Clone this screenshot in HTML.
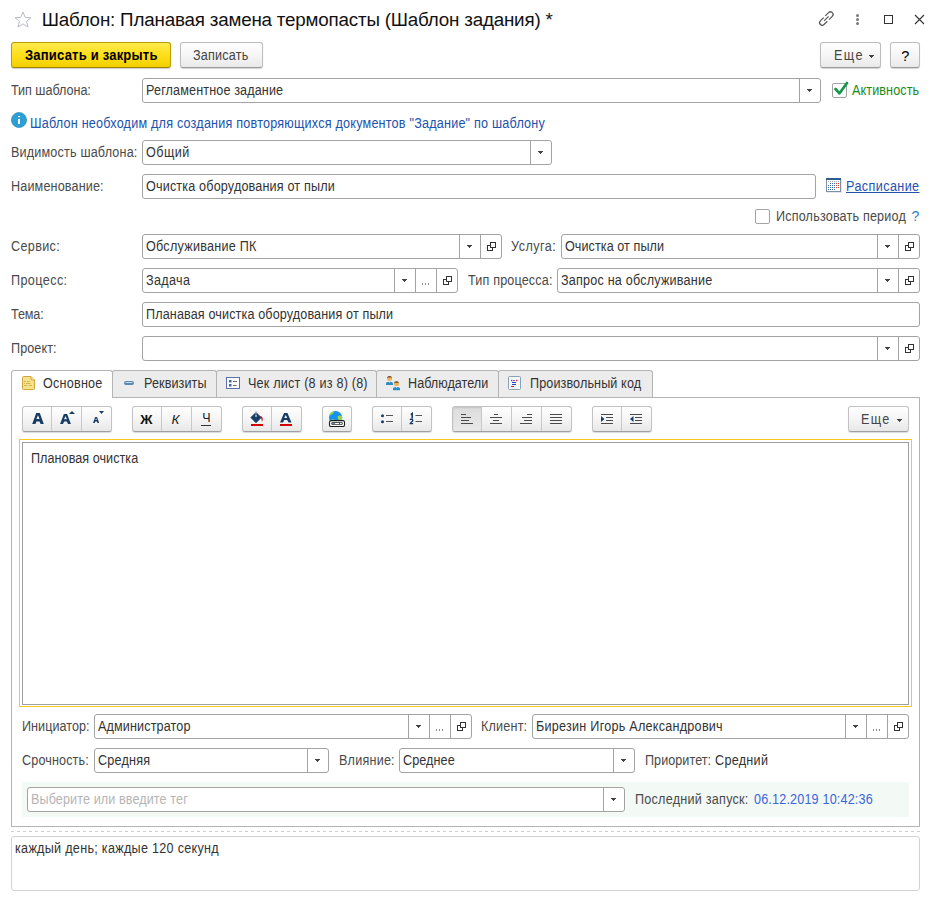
<!DOCTYPE html><html><head><meta charset="utf-8"><style>
html,body{margin:0;padding:0;background:#fff;width:934px;height:900px;overflow:hidden;position:relative;font-family:"Liberation Sans",sans-serif;}
.t{position:absolute;white-space:nowrap;line-height:1;}
.b{position:absolute;box-sizing:border-box;}
.inp{position:absolute;box-sizing:border-box;border:1px solid #a3a3a3;border-radius:3px;background:#fff;}
.sep{position:absolute;width:1px;background:#a3a3a3;}
.ico{position:absolute;line-height:0;}
.ico svg{display:block}
.btn{position:absolute;box-sizing:border-box;border:1px solid #bdbdbd;border-bottom-color:#9a9a9a;border-radius:3px;background:linear-gradient(#ffffff,#f6f6f6 50%,#e9e9e9);box-shadow:0 1px 1px rgba(0,0,0,.18);}
.tab{position:absolute;box-sizing:border-box;border:1px solid #b4b4b4;border-bottom:none;border-radius:3px 3px 0 0;background:#ececec;}
.tb{position:absolute;box-sizing:border-box;top:406px;height:26px;border:1px solid #c2c2c2;border-bottom-color:#a0a0a0;border-radius:3px;background:linear-gradient(#ffffff,#f5f5f5 50%,#e8e8e8);box-shadow:0 1px 1px rgba(0,0,0,.15);}
.tbs{position:absolute;top:0;bottom:0;width:1px;background:#c8c8c8;}
</style></head><body>

<svg style="position:absolute;left:14px;top:11px" width="18" height="17" viewBox="0 0 18 17"><path d="M9 1L11.2 6.4L17 6.7L12.5 10.4L14 16L9 12.9L4 16L5.5 10.4L1 6.7L6.8 6.4Z" fill="none" stroke="#b9bcc0" stroke-width="1"/></svg>
<div class="t" style="left:41.652px;top:10.786px;font-size:18.8px;color:#111;letter-spacing:-0.1899px;">Шаблон: Планавая замена термопасты (Шаблон задания) *</div>
<svg style="position:absolute;left:816px;top:8px" width="20" height="20" viewBox="0 0 20 20"><g transform="translate(10.3 10.6) rotate(-45) scale(0.84) translate(-10 0)" fill="none" stroke="#5a5a5a" stroke-width="1.5"><path d="M8.6 -3.1H3.1A3.1 3.1 0 0 0 3.1 3.1H8.6"/><path d="M11.4 -3.1H16.9A3.1 3.1 0 0 1 16.9 3.1H11.4"/><path d="M6.2 0H13.8"/></g></svg>
<div class="b" style="left:856px;top:14px;width:3px;height:3px;border-radius:50%;background:#7a7a7a"></div>
<div class="b" style="left:856px;top:18px;width:3px;height:3px;border-radius:50%;background:#7a7a7a"></div>
<div class="b" style="left:856px;top:22px;width:3px;height:3px;border-radius:50%;background:#7a7a7a"></div>
<div class="b" style="left:884px;top:15px;width:9px;height:9px;border:1.3px solid #333"></div>
<svg style="position:absolute;left:914px;top:14px" width="11" height="11" viewBox="0 0 11 11"><path d="M1 1L10 10M10 1L1 10" stroke="#333" stroke-width="1.1"/></svg>
<div class="b" style="left:11px;top:42px;width:160px;height:26px;border:1px solid #b9a000;border-bottom-color:#9a8400;border-radius:3px;background:linear-gradient(#ffe94f,#ffdf1a 50%,#f2d000);box-shadow:0 1px 1px rgba(0,0,0,.2)"></div>
<div class="t" style="left:24.988px;top:48.149px;font-size:14px;color:#000;letter-spacing:0.2119px;transform:scaleX(0.93);transform-origin:0 0;font-weight:bold;">Записать и закрыть</div>
<div class="btn" style="left:180px;top:42px;width:83px;height:26px"></div>
<div class="t" style="left:193.484px;top:48.149px;font-size:14.0px;color:#444;letter-spacing:0.2303px;transform:scaleX(0.9);transform-origin:0 0;">Записать</div>
<div class="btn" style="left:820px;top:42px;width:61px;height:26px"></div>
<div class="t" style="left:833.716px;top:48.149px;font-size:14.0px;color:#444;letter-spacing:1.5425px;transform:scaleX(0.9);transform-origin:0 0;">Еще</div>
<div class="b" style="left:869px;top:55px;width:5px;height:1px;background:#444"></div>
<div class="b" style="left:870px;top:56px;width:3px;height:1px;background:#444"></div>
<div class="b" style="left:871px;top:57px;width:1px;height:1px;background:#444"></div>
<div class="btn" style="left:890px;top:42px;width:30px;height:26px"></div>
<div class="t" style="left:901.254px;top:48.726px;font-size:14.5px;color:#000;letter-spacing:0.0000px;">?</div>
<div class="t" style="left:11.492px;top:83.149px;font-size:14.0px;color:#4a4a4a;letter-spacing:-0.0367px;transform:scaleX(0.9);transform-origin:0 0;">Тип шаблона:</div>
<div class="inp" style="left:142px;top:78px;width:679px;height:25px"></div>
<div class="t" style="left:145.666px;top:83.149px;font-size:14.0px;color:#333;letter-spacing:0.1500px;transform:scaleX(0.9);transform-origin:0 0;">Регламентное задание</div>
<div class="sep" style="left:799px;top:78px;height:25px"></div>
<div class="b" style="left:807px;top:89px;width:5px;height:1px;background:#444"></div>
<div class="b" style="left:808px;top:90px;width:3px;height:1px;background:#444"></div>
<div class="b" style="left:809px;top:91px;width:1px;height:1px;background:#444"></div>
<div class="b" style="left:832px;top:83px;width:15px;height:15px;border:1.2px solid #a3a3a3;border-radius:2px;background:#fff"></div>
<svg style="position:absolute;left:830px;top:78px" width="20" height="20" viewBox="0 0 20 20"><path d="M5.5 11L9.5 15.3L17 5" fill="none" stroke="#13984a" stroke-width="2.7" stroke-linecap="round" stroke-linejoin="round"/></svg>
<div class="t" style="left:852.388px;top:83.149px;font-size:14.0px;color:#1a8a1a;letter-spacing:0.1225px;transform:scaleX(0.9);transform-origin:0 0;">Активность</div>
<svg style="position:absolute;left:11px;top:112px" width="16" height="16" viewBox="0 0 16 16"><circle cx="8" cy="8" r="7.6" fill="#2c9fd4" stroke="#2384b4" stroke-width="0.6"/><rect x="7" y="4" width="2" height="1.2" fill="#fff"/><rect x="7" y="7" width="2" height="5" fill="#fff"/></svg>
<div class="t" style="left:30.266px;top:116.149px;font-size:14.0px;color:#2152ad;letter-spacing:0.2367px;transform:scaleX(0.9);transform-origin:0 0;">Шаблон необходим для создания повторяющихся документов "Задание" по шаблону</div>
<div class="t" style="left:10.566px;top:145.149px;font-size:14.0px;color:#4a4a4a;letter-spacing:0.1955px;transform:scaleX(0.9);transform-origin:0 0;">Видимость шаблона:</div>
<div class="inp" style="left:142px;top:140px;width:410px;height:25px"></div>
<div class="t" style="left:146.040px;top:145.149px;font-size:14.0px;color:#333;letter-spacing:0.5259px;transform:scaleX(0.9);transform-origin:0 0;">Общий</div>
<div class="sep" style="left:530px;top:140px;height:25px"></div>
<div class="b" style="left:538px;top:151px;width:5px;height:1px;background:#444"></div>
<div class="b" style="left:539px;top:152px;width:3px;height:1px;background:#444"></div>
<div class="b" style="left:540px;top:153px;width:1px;height:1px;background:#444"></div>
<div class="t" style="left:10.566px;top:179.149px;font-size:14.0px;color:#4a4a4a;letter-spacing:0.1623px;transform:scaleX(0.9);transform-origin:0 0;">Наименование:</div>
<div class="inp" style="left:142px;top:174px;width:674px;height:25px"></div>
<div class="t" style="left:146.040px;top:179.149px;font-size:14.0px;color:#333;letter-spacing:0.1819px;transform:scaleX(0.9);transform-origin:0 0;">Очистка оборудования от пыли</div>
<svg style="position:absolute;left:826px;top:178px" width="16" height="15" viewBox="0 0 16 15" shape-rendering="crispEdges"><rect x="1" y="1" width="15" height="14" fill="#e4e8ee"/><rect x="0.5" y="0.5" width="14" height="13" fill="#fdfeff" stroke="#7f90a4"/><rect x="0" y="0" width="15" height="2" fill="#2c5d8c"/><rect x="2" y="3" width="1" height="1" fill="#a9b0b8"/><rect x="4" y="3" width="1" height="1" fill="#a9b0b8"/><rect x="6" y="3" width="1" height="1" fill="#a9b0b8"/><rect x="8" y="3" width="1" height="1" fill="#a9b0b8"/><rect x="10" y="3" width="1" height="1" fill="#a9b0b8"/><rect x="12" y="3" width="1" height="1" fill="#a9b0b8"/><rect x="4" y="5" width="1" height="1" fill="#3a6aa2"/><rect x="6" y="5" width="1" height="1" fill="#3a6aa2"/><rect x="8" y="5" width="1" height="1" fill="#3a6aa2"/><rect x="10" y="5" width="1" height="1" fill="#d04a3a"/><rect x="12" y="5" width="1" height="1" fill="#d04a3a"/><rect x="2" y="7" width="1" height="1" fill="#3a6aa2"/><rect x="4" y="7" width="1" height="1" fill="#3a6aa2"/><rect x="6" y="7" width="1" height="1" fill="#3a6aa2"/><rect x="8" y="7" width="1" height="1" fill="#3a6aa2"/><rect x="10" y="7" width="1" height="1" fill="#d04a3a"/><rect x="12" y="7" width="1" height="1" fill="#d04a3a"/><rect x="2" y="9" width="1" height="1" fill="#3a6aa2"/><rect x="4" y="9" width="1" height="1" fill="#3a6aa2"/><rect x="6" y="9" width="1" height="1" fill="#3a6aa2"/><rect x="8" y="9" width="1" height="1" fill="#3a6aa2"/><rect x="10" y="9" width="1" height="1" fill="#d04a3a"/><rect x="12" y="9" width="1" height="1" fill="#d04a3a"/><rect x="2" y="11" width="1" height="1" fill="#3a6aa2"/><rect x="4" y="11" width="1" height="1" fill="#3a6aa2"/><rect x="6" y="11" width="1" height="1" fill="#3a6aa2"/><rect x="8" y="11" width="1" height="1" fill="#3a6aa2"/></svg>
<div class="t" style="left:846.416px;top:179.149px;font-size:14.0px;color:#2750b0;letter-spacing:0.4515px;transform:scaleX(0.9);transform-origin:0 0;text-decoration:underline">Расписание</div>
<div class="b" style="left:755px;top:209px;width:15px;height:15px;border:1.2px solid #a3a3a3;border-radius:2px;background:#fff"></div>
<div class="t" style="left:775.716px;top:209.149px;font-size:14.0px;color:#4a4a4a;letter-spacing:0.1972px;transform:scaleX(0.9);transform-origin:0 0;">Использовать период</div>
<div class="t" style="left:911.376px;top:209.149px;font-size:14px;color:#2e7fc4;letter-spacing:0.0000px;">?</div>
<div class="t" style="left:10.798px;top:239.149px;font-size:14.0px;color:#4a4a4a;letter-spacing:0.3843px;transform:scaleX(0.9);transform-origin:0 0;">Сервис:</div>
<div class="inp" style="left:142px;top:234px;width:360px;height:25px"></div>
<div class="t" style="left:146.040px;top:239.149px;font-size:14.0px;color:#333;letter-spacing:0.2756px;transform:scaleX(0.9);transform-origin:0 0;">Обслуживание ПК</div>
<div class="sep" style="left:480px;top:234px;height:25px"></div>
<div class="b" style="left:490px;top:242px;width:6px;height:6px;border:1px solid #333"></div>
<div class="b" style="left:487px;top:245px;width:1px;height:6px;background:#333"></div>
<div class="b" style="left:487px;top:250px;width:6px;height:1px;background:#333"></div>
<div class="b" style="left:487px;top:245px;width:3px;height:1px;background:#333"></div>
<div class="b" style="left:492px;top:248px;width:1px;height:3px;background:#333"></div>
<div class="sep" style="left:459px;top:234px;height:25px"></div>
<div class="b" style="left:467px;top:245px;width:5px;height:1px;background:#444"></div>
<div class="b" style="left:468px;top:246px;width:3px;height:1px;background:#444"></div>
<div class="b" style="left:469px;top:247px;width:1px;height:1px;background:#444"></div>
<div class="t" style="left:511.240px;top:239.149px;font-size:14.0px;color:#4a4a4a;letter-spacing:0.5318px;transform:scaleX(0.9);transform-origin:0 0;">Услуга:</div>
<div class="inp" style="left:561px;top:234px;width:359px;height:25px"></div>
<div class="t" style="left:565.040px;top:239.149px;font-size:14.0px;color:#333;letter-spacing:0.0735px;transform:scaleX(0.9);transform-origin:0 0;">Очистка от пыли</div>
<div class="sep" style="left:898px;top:234px;height:25px"></div>
<div class="b" style="left:908px;top:242px;width:6px;height:6px;border:1px solid #333"></div>
<div class="b" style="left:905px;top:245px;width:1px;height:6px;background:#333"></div>
<div class="b" style="left:905px;top:250px;width:6px;height:1px;background:#333"></div>
<div class="b" style="left:905px;top:245px;width:3px;height:1px;background:#333"></div>
<div class="b" style="left:910px;top:248px;width:1px;height:3px;background:#333"></div>
<div class="sep" style="left:877px;top:234px;height:25px"></div>
<div class="b" style="left:885px;top:245px;width:5px;height:1px;background:#444"></div>
<div class="b" style="left:886px;top:246px;width:3px;height:1px;background:#444"></div>
<div class="b" style="left:887px;top:247px;width:1px;height:1px;background:#444"></div>
<div class="t" style="left:10.616px;top:273.149px;font-size:14.0px;color:#4a4a4a;letter-spacing:0.4486px;transform:scaleX(0.9);transform-origin:0 0;">Процесс:</div>
<div class="inp" style="left:142px;top:268px;width:316px;height:25px"></div>
<div class="t" style="left:145.834px;top:273.149px;font-size:14.0px;color:#333;letter-spacing:0.3794px;transform:scaleX(0.9);transform-origin:0 0;">Задача</div>
<div class="sep" style="left:436px;top:268px;height:25px"></div>
<div class="b" style="left:446px;top:276px;width:6px;height:6px;border:1px solid #333"></div>
<div class="b" style="left:443px;top:279px;width:1px;height:6px;background:#333"></div>
<div class="b" style="left:443px;top:284px;width:6px;height:1px;background:#333"></div>
<div class="b" style="left:443px;top:279px;width:3px;height:1px;background:#333"></div>
<div class="b" style="left:448px;top:282px;width:1px;height:3px;background:#333"></div>
<div class="sep" style="left:415px;top:268px;height:25px"></div>
<div class="b" style="left:422px;top:283px;width:1px;height:2px;background:#8a8a8a"></div>
<div class="b" style="left:425px;top:283px;width:1px;height:2px;background:#8a8a8a"></div>
<div class="b" style="left:428px;top:283px;width:1px;height:2px;background:#8a8a8a"></div>
<div class="sep" style="left:394px;top:268px;height:25px"></div>
<div class="b" style="left:402px;top:279px;width:5px;height:1px;background:#444"></div>
<div class="b" style="left:403px;top:280px;width:3px;height:1px;background:#444"></div>
<div class="b" style="left:404px;top:281px;width:1px;height:1px;background:#444"></div>
<div class="t" style="left:467.692px;top:273.149px;font-size:14.0px;color:#4a4a4a;letter-spacing:0.1772px;transform:scaleX(0.9);transform-origin:0 0;">Тип процесса:</div>
<div class="inp" style="left:557px;top:268px;width:363px;height:25px"></div>
<div class="t" style="left:560.834px;top:273.149px;font-size:14.0px;color:#333;letter-spacing:0.2224px;transform:scaleX(0.9);transform-origin:0 0;">Запрос на обслуживание</div>
<div class="sep" style="left:898px;top:268px;height:25px"></div>
<div class="b" style="left:908px;top:276px;width:6px;height:6px;border:1px solid #333"></div>
<div class="b" style="left:905px;top:279px;width:1px;height:6px;background:#333"></div>
<div class="b" style="left:905px;top:284px;width:6px;height:1px;background:#333"></div>
<div class="b" style="left:905px;top:279px;width:3px;height:1px;background:#333"></div>
<div class="b" style="left:910px;top:282px;width:1px;height:3px;background:#333"></div>
<div class="sep" style="left:877px;top:268px;height:25px"></div>
<div class="b" style="left:885px;top:279px;width:5px;height:1px;background:#444"></div>
<div class="b" style="left:886px;top:280px;width:3px;height:1px;background:#444"></div>
<div class="b" style="left:887px;top:281px;width:1px;height:1px;background:#444"></div>
<div class="t" style="left:11.492px;top:307.149px;font-size:14.0px;color:#4a4a4a;letter-spacing:-0.1236px;transform:scaleX(0.9);transform-origin:0 0;">Тема:</div>
<div class="inp" style="left:142px;top:302px;width:778px;height:25px"></div>
<div class="t" style="left:145.666px;top:307.149px;font-size:14.0px;color:#333;letter-spacing:0.1438px;transform:scaleX(0.9);transform-origin:0 0;">Планавая очистка оборудования от пыли</div>
<div class="t" style="left:10.616px;top:341.149px;font-size:14.0px;color:#4a4a4a;letter-spacing:0.1101px;transform:scaleX(0.9);transform-origin:0 0;">Проект:</div>
<div class="inp" style="left:142px;top:336px;width:778px;height:25px"></div>
<div class="sep" style="left:898px;top:336px;height:25px"></div>
<div class="b" style="left:908px;top:344px;width:6px;height:6px;border:1px solid #333"></div>
<div class="b" style="left:905px;top:347px;width:1px;height:6px;background:#333"></div>
<div class="b" style="left:905px;top:352px;width:6px;height:1px;background:#333"></div>
<div class="b" style="left:905px;top:347px;width:3px;height:1px;background:#333"></div>
<div class="b" style="left:910px;top:350px;width:1px;height:3px;background:#333"></div>
<div class="sep" style="left:877px;top:336px;height:25px"></div>
<div class="b" style="left:885px;top:347px;width:5px;height:1px;background:#444"></div>
<div class="b" style="left:886px;top:348px;width:3px;height:1px;background:#444"></div>
<div class="b" style="left:887px;top:349px;width:1px;height:1px;background:#444"></div>
<div class="tab" style="left:112px;top:370px;width:105px;height:27px"></div>
<div class="tab" style="left:216px;top:370px;width:161px;height:27px"></div>
<div class="tab" style="left:376px;top:370px;width:123px;height:27px"></div>
<div class="tab" style="left:498px;top:370px;width:155px;height:27px"></div>
<div class="b" style="left:11px;top:397px;width:909px;height:430px;border:1px solid #b4b4b4"></div>
<div class="tab" style="left:11px;top:370px;width:102px;height:28px;background:#fff;border-color:#b4b4b4"></div>
<svg style="position:absolute;left:22px;top:376px" width="13" height="14" viewBox="0 0 13 14"><path d="M1.5 0.5H9L12.5 4V12.5A1 1 0 0 1 11.5 13.5H1.5A1 1 0 0 1 0.5 12.5V1.5A1 1 0 0 1 1.5 0.5Z" fill="#f5e28e" stroke="#cfa63c"/><path d="M9 0.5V3A1 1 0 0 0 10 4H12.5" fill="#f9eaa8" stroke="#cfa63c"/><path d="M2 5.5H4M5 5.5H7.5M2 7.5H2.8M4 7.5H8.5M2 9.5H5M6.5 9.5H10" stroke="#d6b24e" stroke-width="1"/></svg>
<div class="t" style="left:42.640px;top:376.149px;font-size:14.0px;color:#333;letter-spacing:0.2557px;transform:scaleX(0.9);transform-origin:0 0;">Основное</div>
<svg style="position:absolute;left:124px;top:381px" width="10" height="4" viewBox="0 0 10 4"><rect x="0" y="0" width="10" height="4" rx="2" fill="#5a88b0"/><rect x="1.5" y="1" width="7" height="1" fill="#c9dcec"/></svg>
<div class="t" style="left:143.666px;top:376.149px;font-size:14.0px;color:#333;letter-spacing:0.1121px;transform:scaleX(0.9);transform-origin:0 0;">Реквизиты</div>
<svg style="position:absolute;left:226px;top:377px" width="14" height="12" viewBox="0 0 14 12"><rect x="0.5" y="0.5" width="13" height="11" fill="#fafbff" stroke="#5b6fad"/><rect x="3" y="3" width="2.5" height="2.5" fill="#4a62a8"/><rect x="3" y="7" width="2.5" height="2.5" fill="#4a62a8"/><path d="M7 4.5H11M7 8.5H10.5" stroke="#6a6a6a"/></svg>
<div class="t" style="left:247.748px;top:376.149px;font-size:14.0px;color:#333;letter-spacing:0.2250px;transform:scaleX(0.9);transform-origin:0 0;">Чек лист (8 из 8) (8)</div>
<svg style="position:absolute;left:385px;top:375px" width="16" height="16" viewBox="0 0 16 16"><path d="M1 10V8.6C1 7.6 2 7 3.5 6.8L4.5 7.8L5.5 6.8C7 7 8 7.6 8 8.6V10Z" fill="#2a8cc8"/><circle cx="4.5" cy="3.6" r="2.5" fill="#eeb35a"/><path d="M2 3.6A2.5 2.5 0 0 1 7 3.6L6.2 2.6H2.8Z" fill="#6b4a28"/><path d="M8 15.2V13.8C8 12.8 9 12.2 10.5 12L11.5 13L12.5 12C14 12.2 15 12.8 15 13.8V15.2Z" fill="#2a8cc8"/><circle cx="11.5" cy="8.8" r="2.5" fill="#eeb35a"/><path d="M9 8.8A2.5 2.5 0 0 1 14 8.8L13.2 7.8H9.8Z" fill="#6b4a28"/></svg>
<div class="t" style="left:407.516px;top:376.149px;font-size:14.0px;color:#333;letter-spacing:0.0337px;transform:scaleX(0.9);transform-origin:0 0;">Наблюдатели</div>
<svg style="position:absolute;left:508px;top:376px" width="13" height="14" viewBox="0 0 13 14"><rect x="0.5" y="0.5" width="12" height="13" rx="1" fill="#f4f8fc" stroke="#8aa0b4"/><rect x="3" y="3.8" width="1.4" height="1.4" fill="#e02020"/><rect x="8" y="3.8" width="1.4" height="1.4" fill="#e02020"/><path d="M5.2 4.5H6.8M4 6.5H8M4 8.5H8" stroke="#2a3cc0" stroke-width="1"/><path d="M3 10.5H6" stroke="#e02020" stroke-width="1.1"/></svg>
<div class="t" style="left:529.616px;top:376.149px;font-size:14.0px;color:#333;letter-spacing:0.1256px;transform:scaleX(0.9);transform-origin:0 0;">Произвольный код</div>
<div class="tb" style="left:22px;width:90px">
<div class="tbs" style="left:28px"></div>
<div class="tbs" style="left:58px"></div>
</div>
<div class="tb" style="left:132px;width:90px">
<div class="tbs" style="left:28px"></div>
<div class="tbs" style="left:58px"></div>
</div>
<div class="tb" style="left:242px;width:60px">
<div class="tbs" style="left:28px"></div>
</div>
<div class="tb" style="left:322px;width:30px">
</div>
<div class="tb" style="left:372px;width:60px">
<div class="tbs" style="left:28px"></div>
</div>
<div class="tb" style="left:452px;width:120px">
<div class="b" style="left:0;top:0;width:29px;height:24px;background:linear-gradient(#dcdcdc,#e9e9e9);border-radius:2px 0 0 2px;box-shadow:inset 0 1px 2px rgba(0,0,0,.12)"></div>
<div class="tbs" style="left:28px"></div>
<div class="tbs" style="left:58px"></div>
<div class="tbs" style="left:88px"></div>
</div>
<div class="tb" style="left:592px;width:60px">
<div class="tbs" style="left:28px"></div>
</div>
<div class="tb" style="left:848px;width:61px"></div>
<div class="t" style="left:861.316px;top:412.149px;font-size:14.0px;color:#444;letter-spacing:1.4402px;transform:scaleX(0.9);transform-origin:0 0;">Еще</div>
<div class="b" style="left:897px;top:419px;width:5px;height:1px;background:#444"></div>
<div class="b" style="left:898px;top:420px;width:3px;height:1px;background:#444"></div>
<div class="b" style="left:899px;top:421px;width:1px;height:1px;background:#444"></div>
<svg style="position:absolute;left:31.5px;top:412.7px" width="12" height="11.6" viewBox="0 0 12 11.6"><path d="M0,11.6 4.2,0 7.8,0 12,11.6 8.879999999999999,11.6 7.476,8.584 4.524,8.584 3.12,11.6Z M4.4399999999999995,6.032 7.5600000000000005,6.032 6.0,2.32Z" fill="#173d66" fill-rule="evenodd"/></svg>
<svg style="position:absolute;left:60.4px;top:414px" width="11" height="10.3" viewBox="0 0 11 10.3"><path d="M0,10.3 3.85,0 7.15,0 11,10.3 8.14,10.3 6.853,7.622000000000001 4.147,7.622000000000001 2.8600000000000003,10.3Z M4.07,5.356000000000001 6.93,5.356000000000001 5.5,2.06Z" fill="#173d66" fill-rule="evenodd"/></svg>
<svg style="position:absolute;left:69px;top:411px" width="6" height="3" viewBox="0 0 6 3"><path d="M0 3H6L3 0Z" fill="#173d66"/></svg>
<svg style="position:absolute;left:92.8px;top:416.5px" width="6.2" height="6" viewBox="0 0 6.2 6"><path d="M0,6 2.17,0 4.03,0 6.2,6 4.588,6 3.8626,4.4399999999999995 2.3374,4.4399999999999995 1.612,6Z M2.294,3.12 3.906,3.12 3.1,1.2000000000000002Z" fill="#173d66" fill-rule="evenodd"/></svg>
<svg style="position:absolute;left:99px;top:411px" width="5" height="3" viewBox="0 0 5 3"><path d="M0 0H5L2.5 3Z" fill="#173d66"/></svg>
<div class="t" style="left:140.324px;top:412.572px;font-size:13.5px;color:#111;letter-spacing:0.0000px;font-weight:bold;">Ж</div>
<div class="t" style="left:171.417px;top:412.572px;font-size:13.5px;color:#222;letter-spacing:0.0000px;font-style:italic;">К</div>
<div class="t" style="left:202.178px;top:412.419px;font-size:12.5px;color:#222;letter-spacing:0.0000px;">Ч</div>
<div class="b" style="left:201px;top:425px;width:10px;height:1px;background:#333"></div>
<svg style="position:absolute;left:249px;top:410px" width="16" height="17" viewBox="0 0 16 17"><path d="M7 2.4L12.2 7.6L7 12.8L1.8 7.6Z" fill="#173d66" stroke="#173d66" stroke-width="0.8" stroke-linejoin="round"/><circle cx="7" cy="5.9" r="1.1" fill="#9fb4cc"/><path d="M7 0.5V4.5" stroke="#b9c8d8" stroke-width="0.9"/><path d="M11.5 5.9C13.8 6.6 14.5 9.5 12.8 11.8C12.8 10 12.5 8 11.5 7.2Z" fill="#d40000"/><rect x="2" y="14" width="12" height="2" fill="#d40000"/></svg>
<svg style="position:absolute;left:280.3px;top:413px" width="11.5" height="9.6" viewBox="0 0 11.5 9.6"><path d="M0,9.6 4.025,0 7.475,0 11.5,9.6 8.51,9.6 7.164499999999999,7.104 4.335500000000001,7.104 2.99,9.6Z M4.255,4.992 7.245,4.992 5.75,1.92Z" fill="#173d66" fill-rule="evenodd"/></svg>
<div class="b" style="left:280px;top:424px;width:12px;height:2px;background:#d40000"></div>
<svg style="position:absolute;left:328px;top:410px" width="18" height="17" viewBox="0 0 18 17"><defs><clipPath id="gc"><rect x="0" y="0" width="18" height="10.3"/></clipPath></defs><g clip-path="url(#gc)"><circle cx="7.6" cy="7.6" r="6.6" fill="#1591f0"/><path d="M1.2 5.2C2 2.8 3.6 1.6 5.6 1.5C6 2.6 5 3.8 3.6 4.6C2.8 5.2 2 5.8 1.2 5.2Z M9.6 6.5C10.6 5.3 12.6 4.9 14.2 6.2C14.4 8.6 13.8 10 13 10.5H10.8C10.4 9.2 9.4 8 9.6 6.5Z M3 10.5C3.6 8.9 5.8 8.8 7.4 10.5Z M12 2.5C12.6 2.4 13.2 3 13.4 3.6C12.8 3.8 12.2 3.4 12 2.5Z" fill="#9ad44c"/></g><rect x="1.5" y="10.6" width="15" height="5.9" rx="1.6" fill="#fff" stroke="#1a1a1a" stroke-width="1.1"/><rect x="3.3" y="12.3" width="11.4" height="2.5" rx="1.1" fill="#1a1a1a"/><rect x="6.6" y="13" width="4.6" height="1.1" fill="#fff"/><rect x="4.2" y="13" width="1.6" height="1.1" fill="#6ab0e8"/><rect x="12" y="13" width="1.8" height="1.1" fill="#fff"/></svg>
<svg style="position:absolute;left:380px;top:413px" width="14" height="11" viewBox="0 0 14 11"><circle cx="2.5" cy="2.7" r="1.5" fill="#173d66"/><circle cx="2.5" cy="8.7" r="1.5" fill="#173d66"/><path d="M6 2.5H13M6 8.5H13" stroke="#555"/></svg>
<svg style="position:absolute;left:409px;top:412px" width="14" height="13" viewBox="0 0 14 13"><path d="M1.8 2.6L3.2 1.5V6.5" stroke="#173d66" stroke-width="1.6" fill="none"/><path d="M1 7.8C1.5 7 3.8 7 3.8 8.4C3.8 9.6 1.2 10.4 1.2 11.6H4.2" stroke="#173d66" stroke-width="1.4" fill="none"/><path d="M6.5 3.5H13M6.5 9.5H13" stroke="#555"/></svg>
<div class="b" style="left:461px;top:414px;width:5px;height:1px;background:#4a4a4a"></div>
<div class="b" style="left:461px;top:417px;width:10px;height:1px;background:#4a4a4a"></div>
<div class="b" style="left:461px;top:420px;width:8px;height:1px;background:#4a4a4a"></div>
<div class="b" style="left:461px;top:423px;width:12px;height:1px;background:#4a4a4a"></div>
<div class="b" style="left:494px;top:414px;width:4px;height:1px;background:#4a4a4a"></div>
<div class="b" style="left:490px;top:417px;width:12px;height:1px;background:#4a4a4a"></div>
<div class="b" style="left:493px;top:420px;width:6px;height:1px;background:#4a4a4a"></div>
<div class="b" style="left:490px;top:423px;width:12px;height:1px;background:#4a4a4a"></div>
<div class="b" style="left:527px;top:414px;width:5px;height:1px;background:#4a4a4a"></div>
<div class="b" style="left:522px;top:417px;width:10px;height:1px;background:#4a4a4a"></div>
<div class="b" style="left:524px;top:420px;width:8px;height:1px;background:#4a4a4a"></div>
<div class="b" style="left:520px;top:423px;width:12px;height:1px;background:#4a4a4a"></div>
<div class="b" style="left:550px;top:414px;width:12px;height:1px;background:#4a4a4a"></div>
<div class="b" style="left:550px;top:417px;width:12px;height:1px;background:#4a4a4a"></div>
<div class="b" style="left:550px;top:420px;width:12px;height:1px;background:#4a4a4a"></div>
<div class="b" style="left:550px;top:423px;width:12px;height:1px;background:#4a4a4a"></div>
<div class="b" style="left:601px;top:414px;width:12px;height:1px;background:#4a4a4a"></div>
<div class="b" style="left:606px;top:417px;width:7px;height:1px;background:#4a4a4a"></div>
<div class="b" style="left:606px;top:420px;width:7px;height:1px;background:#4a4a4a"></div>
<div class="b" style="left:601px;top:423px;width:12px;height:1px;background:#4a4a4a"></div>
<svg style="position:absolute;left:601px;top:416px" width="4" height="6" viewBox="0 0 4 6"><path d="M0 0L3.5 3L0 6Z" fill="#173d66"/></svg>
<div class="b" style="left:630px;top:414px;width:12px;height:1px;background:#4a4a4a"></div>
<div class="b" style="left:635px;top:417px;width:7px;height:1px;background:#4a4a4a"></div>
<div class="b" style="left:635px;top:420px;width:7px;height:1px;background:#4a4a4a"></div>
<div class="b" style="left:630px;top:423px;width:12px;height:1px;background:#4a4a4a"></div>
<svg style="position:absolute;left:630px;top:416px" width="4" height="6" viewBox="0 0 4 6"><path d="M3.5 0L0 3L3.5 6Z" fill="#173d66"/></svg>
<div class="b" style="left:19px;top:439px;width:893px;height:268px;border:1px solid #f8c81c"></div>
<div class="b" style="left:22px;top:442px;width:887px;height:263px;border:1px solid #a0a0a0"></div>
<div class="t" style="left:31.416px;top:451.149px;font-size:14.0px;color:#333;letter-spacing:0.0559px;transform:scaleX(0.9);transform-origin:0 0;">Плановая очистка</div>
<div class="t" style="left:21.566px;top:719.149px;font-size:14.0px;color:#4a4a4a;letter-spacing:0.0537px;transform:scaleX(0.9);transform-origin:0 0;">Инициатор:</div>
<div class="inp" style="left:94px;top:714px;width:378px;height:25px"></div>
<div class="t" style="left:98.138px;top:719.149px;font-size:14.0px;color:#333;letter-spacing:0.1466px;transform:scaleX(0.9);transform-origin:0 0;">Администратор</div>
<div class="sep" style="left:450px;top:714px;height:25px"></div>
<div class="b" style="left:460px;top:722px;width:6px;height:6px;border:1px solid #333"></div>
<div class="b" style="left:457px;top:725px;width:1px;height:6px;background:#333"></div>
<div class="b" style="left:457px;top:730px;width:6px;height:1px;background:#333"></div>
<div class="b" style="left:457px;top:725px;width:3px;height:1px;background:#333"></div>
<div class="b" style="left:462px;top:728px;width:1px;height:3px;background:#333"></div>
<div class="sep" style="left:429px;top:714px;height:25px"></div>
<div class="b" style="left:436px;top:729px;width:1px;height:2px;background:#8a8a8a"></div>
<div class="b" style="left:439px;top:729px;width:1px;height:2px;background:#8a8a8a"></div>
<div class="b" style="left:442px;top:729px;width:1px;height:2px;background:#8a8a8a"></div>
<div class="sep" style="left:408px;top:714px;height:25px"></div>
<div class="b" style="left:416px;top:725px;width:5px;height:1px;background:#444"></div>
<div class="b" style="left:417px;top:726px;width:3px;height:1px;background:#444"></div>
<div class="b" style="left:418px;top:727px;width:1px;height:1px;background:#444"></div>
<div class="t" style="left:481.366px;top:719.149px;font-size:14.0px;color:#4a4a4a;letter-spacing:0.2106px;transform:scaleX(0.9);transform-origin:0 0;">Клиент:</div>
<div class="inp" style="left:532px;top:714px;width:377px;height:25px"></div>
<div class="t" style="left:535.666px;top:719.149px;font-size:14.0px;color:#333;letter-spacing:0.2802px;transform:scaleX(0.9);transform-origin:0 0;">Бирезин Игорь Александрович</div>
<div class="sep" style="left:887px;top:714px;height:25px"></div>
<div class="b" style="left:897px;top:722px;width:6px;height:6px;border:1px solid #333"></div>
<div class="b" style="left:894px;top:725px;width:1px;height:6px;background:#333"></div>
<div class="b" style="left:894px;top:730px;width:6px;height:1px;background:#333"></div>
<div class="b" style="left:894px;top:725px;width:3px;height:1px;background:#333"></div>
<div class="b" style="left:899px;top:728px;width:1px;height:3px;background:#333"></div>
<div class="sep" style="left:866px;top:714px;height:25px"></div>
<div class="b" style="left:873px;top:729px;width:1px;height:2px;background:#8a8a8a"></div>
<div class="b" style="left:876px;top:729px;width:1px;height:2px;background:#8a8a8a"></div>
<div class="b" style="left:879px;top:729px;width:1px;height:2px;background:#8a8a8a"></div>
<div class="sep" style="left:845px;top:714px;height:25px"></div>
<div class="b" style="left:853px;top:725px;width:5px;height:1px;background:#444"></div>
<div class="b" style="left:854px;top:726px;width:3px;height:1px;background:#444"></div>
<div class="b" style="left:855px;top:727px;width:1px;height:1px;background:#444"></div>
<div class="t" style="left:21.748px;top:753.149px;font-size:14.0px;color:#4a4a4a;letter-spacing:0.1504px;transform:scaleX(0.9);transform-origin:0 0;">Срочность:</div>
<div class="inp" style="left:94px;top:748px;width:235px;height:25px"></div>
<div class="t" style="left:97.848px;top:753.149px;font-size:14.0px;color:#333;letter-spacing:0.2461px;transform:scaleX(0.9);transform-origin:0 0;">Средняя</div>
<div class="sep" style="left:307px;top:748px;height:25px"></div>
<div class="b" style="left:315px;top:759px;width:5px;height:1px;background:#444"></div>
<div class="b" style="left:316px;top:760px;width:3px;height:1px;background:#444"></div>
<div class="b" style="left:317px;top:761px;width:1px;height:1px;background:#444"></div>
<div class="t" style="left:338.666px;top:753.149px;font-size:14.0px;color:#4a4a4a;letter-spacing:0.2344px;transform:scaleX(0.9);transform-origin:0 0;">Влияние:</div>
<div class="inp" style="left:399px;top:748px;width:236px;height:25px"></div>
<div class="t" style="left:402.848px;top:753.149px;font-size:14.0px;color:#333;letter-spacing:0.0947px;transform:scaleX(0.9);transform-origin:0 0;">Среднее</div>
<div class="sep" style="left:613px;top:748px;height:25px"></div>
<div class="b" style="left:621px;top:759px;width:5px;height:1px;background:#444"></div>
<div class="b" style="left:622px;top:760px;width:3px;height:1px;background:#444"></div>
<div class="b" style="left:623px;top:761px;width:1px;height:1px;background:#444"></div>
<div class="t" style="left:644.716px;top:753.149px;font-size:14.0px;color:#4a4a4a;letter-spacing:0.0567px;transform:scaleX(0.9);transform-origin:0 0;">Приоритет:</div>
<div class="t" style="left:714.598px;top:753.149px;font-size:14.0px;color:#333;letter-spacing:0.3254px;transform:scaleX(0.9);transform-origin:0 0;">Средний</div>
<div class="b" style="left:22px;top:782px;width:887px;height:35px;background:#f3f9f5"></div>
<div class="inp" style="left:27px;top:787px;width:598px;height:25px"></div>
<div class="t" style="left:30.666px;top:792.149px;font-size:14.0px;color:#b5b5b5;letter-spacing:0.1138px;transform:scaleX(0.9);transform-origin:0 0;">Выберите или введите тег</div>
<div class="sep" style="left:603px;top:787px;height:25px"></div>
<div class="b" style="left:611px;top:798px;width:5px;height:1px;background:#444"></div>
<div class="b" style="left:612px;top:799px;width:3px;height:1px;background:#444"></div>
<div class="b" style="left:613px;top:800px;width:1px;height:1px;background:#444"></div>
<div class="t" style="left:634.716px;top:792.149px;font-size:14.0px;color:#4a4a4a;letter-spacing:0.2743px;transform:scaleX(0.9);transform-origin:0 0;">Последний запуск:</div>
<div class="t" style="left:753.832px;top:792.149px;font-size:14.0px;color:#3b66dc;letter-spacing:0.1914px;transform:scaleX(0.9);transform-origin:0 0;">06.12.2019 10:42:36</div>
<div class="b" style="left:11px;top:831px;width:909px;height:1px;background:repeating-linear-gradient(90deg,#cfcfcf 0 3px,transparent 3px 6px)"></div>
<div class="b" style="left:11px;top:836px;width:909px;height:55px;border:1px solid #d2d2d2;border-radius:3px"></div>
<div class="t" style="left:14.550px;top:840.649px;font-size:14.0px;color:#333;letter-spacing:0.3230px;transform:scaleX(0.9);transform-origin:0 0;">каждый день; каждые 120 секунд</div>
</body></html>
